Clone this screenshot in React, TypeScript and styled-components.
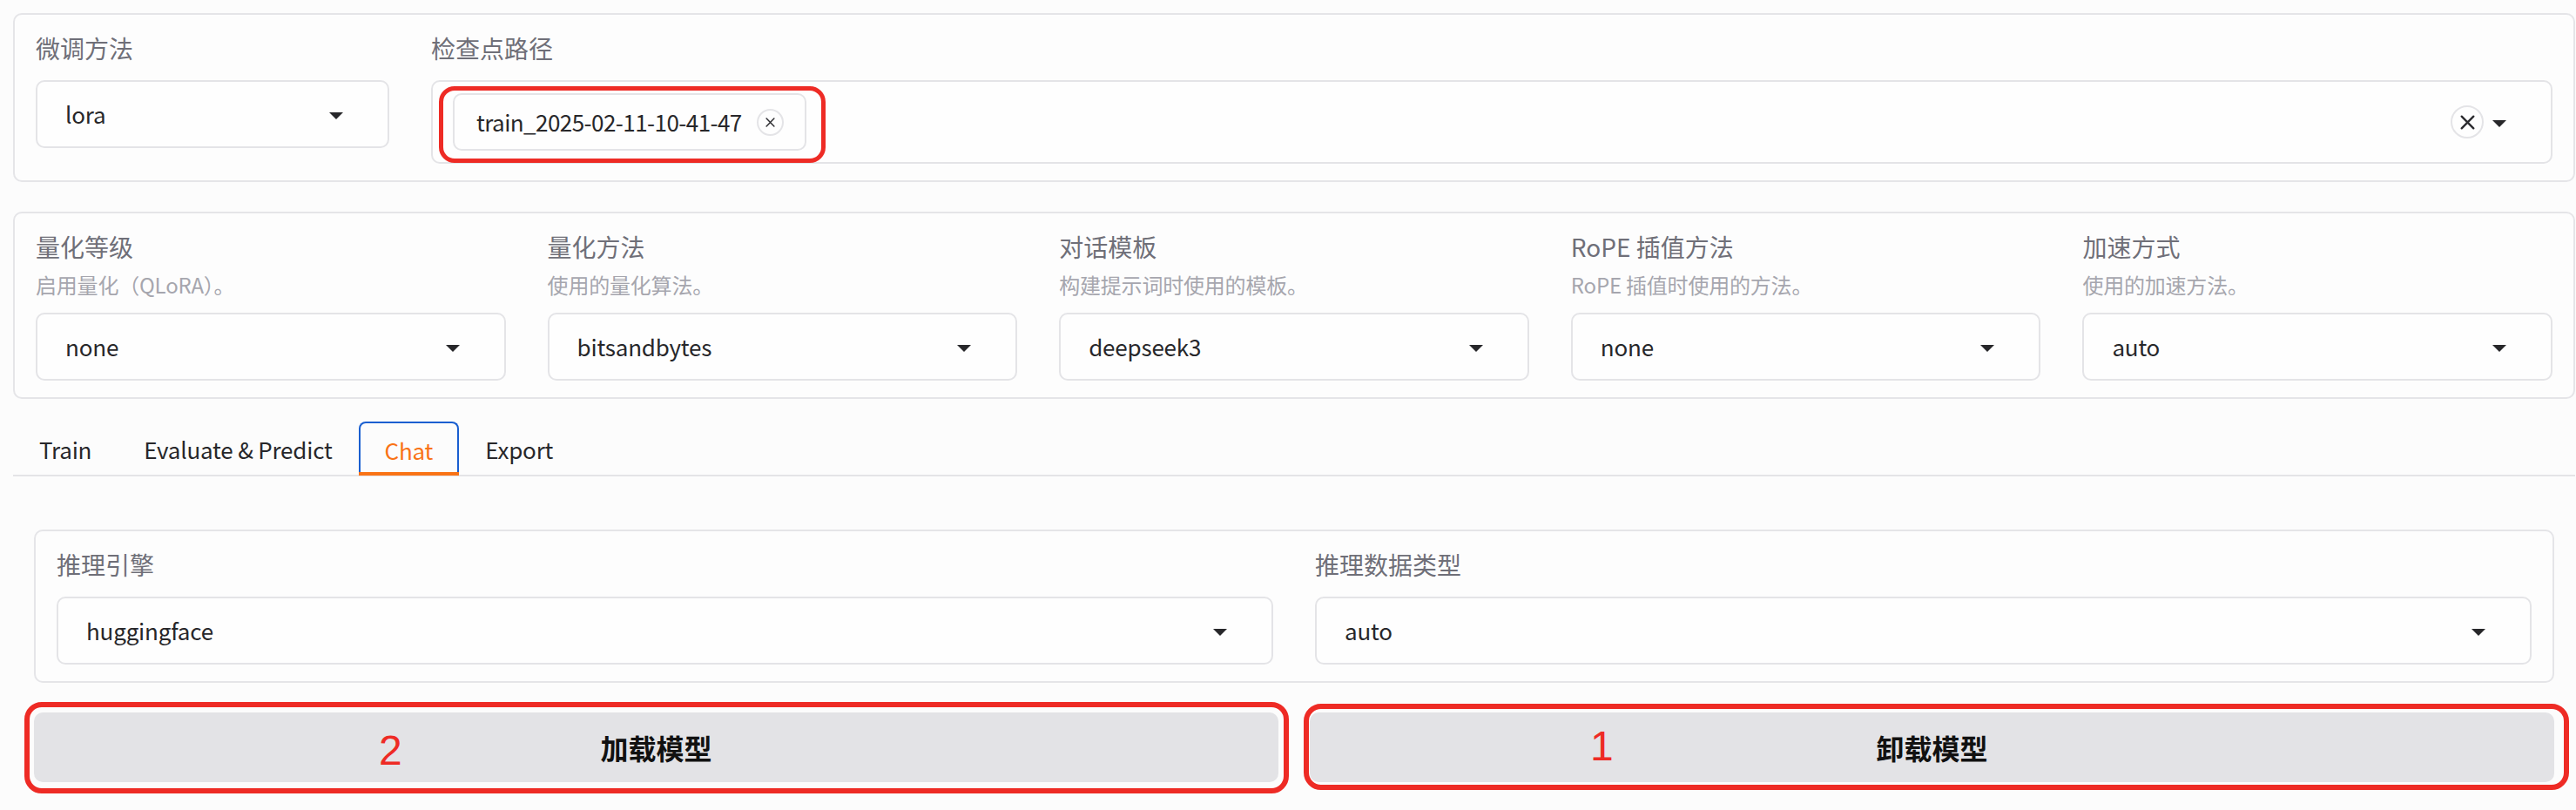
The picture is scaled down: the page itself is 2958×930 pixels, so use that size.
import React from "react";
import styled, { createGlobalStyle } from "styled-components";

const GlobalStyle = createGlobalStyle`
  html, body {
    margin: 0;
    padding: 0;
    background: #fcfcfc;
  }
  body {
    font-family: "Noto Sans CJK SC", "Noto Sans", sans-serif;
    color: #27272a;
  }
  * {
    box-sizing: border-box;
  }
`;

const Page = styled.main`
  width: 2957px;
  min-height: 930px;
  padding: 15px 0 0 15px;
  display: flex;
  flex-direction: column;
`;

const Panel = styled.section<{ $top?: number }>`
  margin-top: ${(p) => p.$top ?? 0}px;
  background: #fdfdfd;
  border: 2px solid #e5e5e8;
  border-radius: 10px;
  padding: 18px 24px 19px;
  display: flex;
  align-items: flex-start;
  gap: 48px;
`;

const Field = styled.div<{ $grow?: number }>`
  flex: ${(p) => p.$grow ?? 1} 1 0;
  min-width: 0;
  display: flex;
  flex-direction: column;
`;

const Label = styled.span`
  font-size: 28px;
  line-height: 40px;
  color: #6f6f78;
`;

const Info = styled.span`
  margin-top: 4px;
  font-size: 24px;
  line-height: 40px;
  letter-spacing: -0.2px;
  color: #a6a6ae;
`;

const SelectBox = styled.div<{ $offset: number; $height: number; $padLeft: number }>`
  margin-top: ${(p) => p.$offset}px;
  height: ${(p) => p.$height}px;
  display: flex;
  align-items: center;
  padding: 0 41px 0 ${(p) => p.$padLeft}px;
  background: #fefefe;
  border: 2px solid #e4e4e7;
  border-radius: 10px;
`;

const Value = styled.span<{ $tight?: boolean }>`
  font-size: 26px;
  line-height: 40px;
  letter-spacing: ${(p) => (p.$tight ? -0.55 : -0.2)}px;
  color: #27272a;
`;

const Trailing = styled.div`
  margin-left: auto;
  display: flex;
  align-items: center;
`;

const Chip = styled.div`
  position: relative;
  height: 66px;
  display: flex;
  align-items: center;
  gap: 17px;
  padding: 0 24px 0 25px;
  border: 2px solid #e4e4e7;
  border-radius: 10px;
  background: #fefefe;
`;

const CircleButton = styled.span<{ $size: number }>`
  width: ${(p) => p.$size}px;
  height: ${(p) => p.$size}px;
  display: inline-flex;
  align-items: center;
  justify-content: center;
  border: 2px solid #e4e4e7;
  border-radius: 50%;
  background: #fefefe;
`;

const Annotation = styled.span<{ $inset: string; $width: number; $radius: number }>`
  position: absolute;
  inset: ${(p) => p.$inset};
  border: ${(p) => p.$width}px solid #ee2b25;
  border-radius: ${(p) => p.$radius}px;
  pointer-events: none;
`;

const Marker = styled.span<{ $left: number; $top: number }>`
  position: absolute;
  left: ${(p) => p.$left}px;
  top: ${(p) => p.$top}px;
  font-family: "Liberation Sans", Arial, sans-serif;
  font-size: 48px;
  line-height: 1;
  font-weight: 400;
  color: #ee2b25;
`;

const TabBar = styled.nav`
  margin-top: 26px;
  display: flex;
  border-bottom: 2px solid #e4e4e7;
`;

const Tab = styled.button<{ $active?: boolean }>`
  position: relative;
  height: 62px;
  margin-bottom: -1px;
  padding: 0 ${(p) => (p.$active ? 28 : 30)}px;
  background: none;
  border: ${(p) => (p.$active ? "2px solid #1a5fd0" : "none")};
  border-bottom: none;
  border-radius: 8px 8px 0 0;
  font-family: inherit;
  font-size: 26px;
  letter-spacing: -0.2px;
  color: ${(p) => (p.$active ? "#f97316" : "#27272a")};

  &::after {
    content: "";
    display: ${(p) => (p.$active ? "block" : "none")};
    position: absolute;
    left: -2px;
    right: -2px;
    bottom: 0;
    height: 4px;
    background: #f97316;
  }
`;

const TabContent = styled.div`
  padding: 61px 24px 0;
  display: flex;
  flex-direction: column;
`;

const ButtonRow = styled.div`
  margin-top: 34px;
  display: grid;
  grid-template-columns: 1fr 1fr;
  gap: 36px;
`;

const ActionButton = styled.button`
  position: relative;
  height: 80px;
  border: none;
  border-radius: 10px;
  background: #e3e3e6;
  font-family: inherit;
  font-size: 32px;
  font-weight: 700;
  color: #111;
`;

const Arrow = () => (
  <svg width="36" height="36" viewBox="0 0 18 18">
    <path d="M5 8l4 4 4-4z" fill="#27272a" />
  </svg>
);

const Cross = ({ size, stroke }: { size: number; stroke: number }) => (
  <svg width={size} height={size} viewBox="0 0 10 10">
    <path d="M1 1L9 9M9 1L1 9" stroke="#2a2a2e" strokeWidth={stroke} strokeLinecap="round" />
  </svg>
);

const Dropdown = ({ value, offset }: { value: string; offset: number }) => (
  <SelectBox $offset={offset} $height={78} $padLeft={32}>
    <Value>{value}</Value>
    <Trailing>
      <Arrow />
    </Trailing>
  </SelectBox>
);

const quantFields = [
  { label: "量化等级", info: "启用量化（QLoRA）。", value: "none" },
  { label: "量化方法", info: "使用的量化算法。", value: "bitsandbytes" },
  { label: "对话模板", info: "构建提示词时使用的模板。", value: "deepseek3" },
  { label: "RoPE 插值方法", info: "RoPE 插值时使用的方法。", value: "none" },
  { label: "加速方式", info: "使用的加速方法。", value: "auto" },
];

const tabs = ["Train", "Evaluate & Predict", "Chat", "Export"];

const App: React.FC = () => {
  return (
    <>
      <GlobalStyle />
      <Page>
        <Panel>
          <Field $grow={1}>
            <Label>微调方法</Label>
            <Dropdown value="lora" offset={17} />
          </Field>
          <Field $grow={6}>
            <Label>检查点路径</Label>
            <SelectBox $offset={17} $height={96} $padLeft={23}>
              <Chip>
                <Value $tight>train_2025-02-11-10-41-47</Value>
                <CircleButton $size={31}>
                  <Cross size={11} stroke={1.3} />
                </CircleButton>
                <Annotation $inset="-10px -24px -16px -18px" $width={5} $radius={18} />
              </Chip>
              <Trailing>
                <CircleButton $size={38}>
                  <Cross size={17} stroke={1.4} />
                </CircleButton>
                <Arrow />
              </Trailing>
            </SelectBox>
          </Field>
        </Panel>

        <Panel $top={34}>
          {quantFields.map((f) => (
            <Field key={f.label}>
              <Label>{f.label}</Label>
              <Info>{f.info}</Info>
              <Dropdown value={f.value} offset={12} />
            </Field>
          ))}
        </Panel>

        <TabBar>
          {tabs.map((t) => (
            <Tab key={t} $active={t === "Chat"}>
              {t}
            </Tab>
          ))}
        </TabBar>

        <TabContent>
          <Panel>
            <Field>
              <Label>推理引擎</Label>
              <Dropdown value="huggingface" offset={17} />
            </Field>
            <Field>
              <Label>推理数据类型</Label>
              <Dropdown value="auto" offset={17} />
            </Field>
          </Panel>

          <ButtonRow>
            <ActionButton>
              加载模型
              <Marker $left={396} $top={20}>2</Marker>
              <Annotation $inset="-12px -12px -13px -11px" $width={6} $radius={20} />
            </ActionButton>
            <ActionButton>
              卸载模型
              <Marker $left={322} $top={15}>1</Marker>
              <Annotation $inset="-10px -17px -9px -7px" $width={6} $radius={20} />
            </ActionButton>
          </ButtonRow>
        </TabContent>
      </Page>
    </>
  );
};

export default App;
